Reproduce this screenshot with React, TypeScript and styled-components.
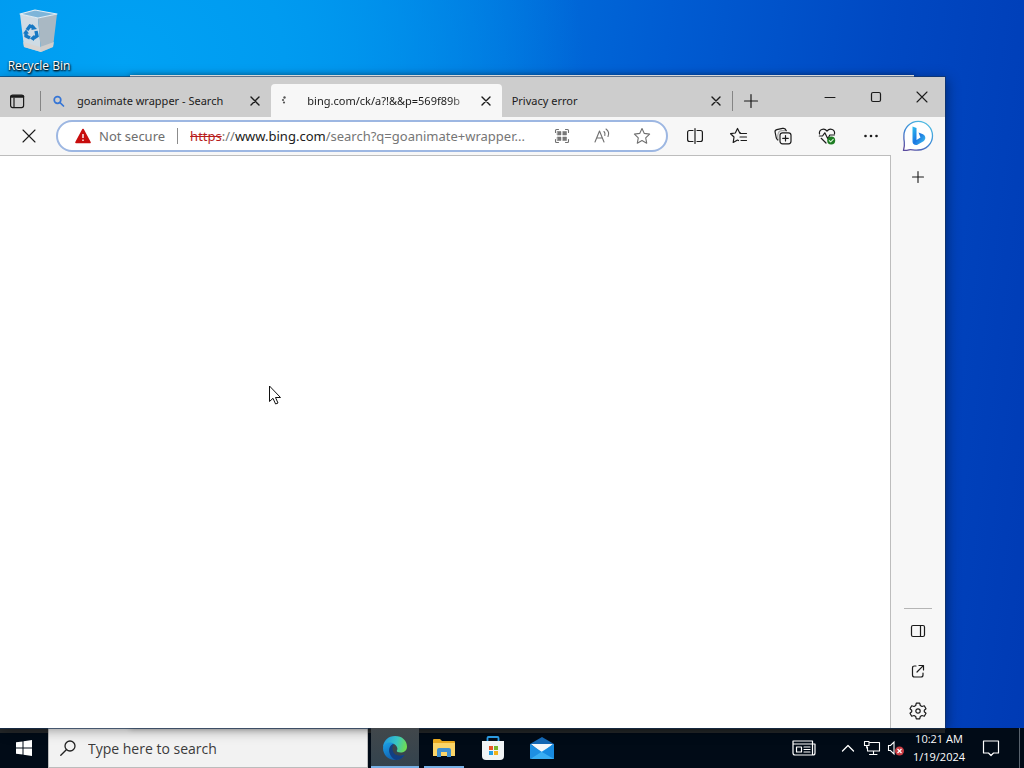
import React from "react";
import styled, { createGlobalStyle } from "styled-components";

const GlobalStyle = createGlobalStyle`
  *, *::before, *::after { box-sizing: border-box; }
  html, body, #root { height: 100%; margin: 0; }
  body { overflow: hidden; font-family: "Open Sans", "Noto Sans", sans-serif; font-size: 12px; color: #1b1b1b; }
  button, input { font: inherit; color: inherit; }
  svg { display: block; flex: none; }
`;

const Screen = styled.div`
  height: 100%;
  display: flex;
  flex-direction: column;
  background:
    radial-gradient(ellipse 45% 50% at 12% 8%, #00a2f4 0%, #009bf0 35%, rgba(0, 140, 234, 0) 100%),
    linear-gradient(97deg, #0094ee 0%, #0084e6 28%, #005cd2 60%, #0048c2 80%, #003ab4 100%);
`;

const Desktop = styled.main`
  position: relative;
  flex: 1;
  min-height: 0;
  padding: 8px 2px;
`;

const DesktopIcon = styled.button`
  width: 74px;
  padding: 0;
  border: 0;
  background: none;
  display: flex;
  flex-direction: column;
  align-items: center;
  gap: 4px;
  color: #fff;
  font-size: 12px;
  line-height: 18px;
  white-space: nowrap;
  text-shadow: 1px 1px 2px #000, 0 1px 2px #000;
`;

const WindowBehind = styled.div`
  position: absolute;
  top: 75px;
  right: 110px;
  bottom: 0;
  left: 130px;
  background: #f3f3f3;
  box-shadow: 0 0 6px rgba(0, 0, 0, 0.35);
`;

const BrowserWindow = styled.section`
  position: absolute;
  top: 77px;
  right: 79px;
  bottom: 0;
  left: 0;
  display: flex;
  flex-direction: column;
  background: #f7f7f7;
  box-shadow: 0 0 0 1px rgba(20, 50, 90, 0.6), 2px 2px 12px rgba(0, 0, 0, 0.4);
`;

const TabStrip = styled.header`
  display: flex;
  align-items: flex-end;
  height: 40px;
  background: #cdcdcd;
`;

const IconButton = styled.button<{ $w?: number; $h?: number }>`
  flex: none;
  width: ${(p) => p.$w ?? 36}px;
  height: ${(p) => p.$h ?? 32}px;
  padding: 0;
  border: 0;
  background: none;
  display: flex;
  align-items: center;
  justify-content: center;
`;

const TabActionsSlot = styled.div`
  flex: none;
  width: 40px;
`;

const Tabs = styled.nav`
  flex: 0 1 691px;
  min-width: 0;
  height: 33px;
  display: flex;
`;

const Tab = styled.div<{ $active?: boolean }>`
  flex: 1;
  min-width: 0;
  display: flex;
  align-items: center;
  padding: 0 4px 0 10px;
  border-radius: 4px 4px 0 0;
  background: ${(p) => (p.$active ? "#f7f7f7" : "transparent")};
`;

const TabTitle = styled.button<{ $fade?: boolean; $gap?: number }>`
  flex: 1;
  min-width: 0;
  padding: 0;
  margin-left: ${(p) => p.$gap ?? 0}px;
  border: 0;
  background: none;
  overflow: hidden;
  white-space: nowrap;
  text-align: left;
  font-family: "Noto Sans", sans-serif;
  font-size: 11px;
  line-height: 16px;
  mask-image: ${(p) => (p.$fade ? "linear-gradient(to left, transparent, #000 24px)" : "none")};
`;

const StripDivider = styled.span`
  flex: none;
  width: 1px;
  height: 20px;
  margin-bottom: 6px;
  background: #858585;
`;

const WindowControls = styled.div`
  display: flex;
  align-self: stretch;
  margin-left: auto;
`;

const WindowBody = styled.div`
  flex: 1;
  min-height: 0;
  display: flex;
`;

const MainColumn = styled.div`
  flex: 1;
  min-width: 0;
  display: flex;
  flex-direction: column;
`;

const Toolbar = styled.div`
  height: 39px;
  display: flex;
  align-items: center;
  padding: 0 1px 0 11px;
  border-bottom: 1px solid #bdbdbd;
`;

const AddressBar = styled.div`
  flex: 1;
  min-width: 0;
  height: 32px;
  margin: 0 9px;
  padding: 0 4px 0 17px;
  display: flex;
  align-items: center;
  border: 2px solid #9db7e2;
  border-radius: 16px;
  background: #fff;
  font-family: "Noto Sans", sans-serif;
  font-size: 13px;
  line-height: 20px;
`;

const SecurityButton = styled.button`
  flex: none;
  padding: 0 12px 0 0;
  border: 0;
  border-right: 1px solid #8c8c8c;
  background: none;
  display: flex;
  align-items: center;
  gap: 8px;
  height: 16px;
  color: #6e6e6e;
  white-space: nowrap;
`;

const UrlField = styled.div`
  flex: 1;
  min-width: 0;
  display: grid;
  margin-left: 12px;
  > * { grid-area: 1 / 1; }
`;

const UrlText = styled.span`
  overflow: hidden;
  white-space: nowrap;
  color: #767676;
  s { color: #b81d1d; }
  b { color: #202020; font-weight: 400; }
`;

const UrlInput = styled.input`
  width: 100%;
  min-width: 0;
  padding: 0;
  border: 0;
  outline: 0;
  background: transparent;
`;

const Tools = styled.div`
  display: flex;
  gap: 8px;
`;

const Page = styled.div`
  position: relative;
  flex: 1;
  background: #fff;
`;

const Pointer = styled.svg`
  position: absolute;
  top: 229px;
  left: 268px;
`;

const Sidebar = styled.aside`
  flex: none;
  width: 55px;
  display: flex;
  flex-direction: column;
`;

const SidebarTop = styled.div`
  height: 38px;
  display: flex;
  align-items: center;
  justify-content: center;
`;

const SidebarBody = styled.div`
  flex: 1;
  display: flex;
  flex-direction: column;
  align-items: center;
  gap: 8px;
  padding: 6px 0 1px;
  border-left: 1px solid #bdbdbd;
`;

const SidebarRule = styled.hr`
  width: 28px;
  margin: auto 0 -2px;
  border: 0;
  border-top: 1px solid #b5b5b5;
`;

/* The strip along the top, under the browser window, shows through lighter. */
const Taskbar = styled.footer`
  flex: none;
  height: 40px;
  display: flex;
  align-items: stretch;
  background: linear-gradient(#242729, #242729) 0 0 / calc(100% - 79px) 5px no-repeat, #010b17;
  color: #fff;
`;

const SearchBox = styled.label`
  flex: 0 1 320px;
  min-width: 0;
  margin-right: 3px;
  padding: 0 11px;
  display: flex;
  align-items: center;
  gap: 12px;
  border: 1px solid #bcbcbc;
  background: #f2f2f2;
`;

const SearchInput = styled.input`
  flex: 1;
  min-width: 0;
  padding: 0;
  border: 0;
  outline: 0;
  background: none;
  font-size: 14px;
  &::placeholder { color: #3b3b3b; opacity: 1; }
`;

const Apps = styled.nav`
  flex: 1;
  display: flex;
  gap: 1px;
`;

const AppButton = styled.button<{ $state?: "active" | "open" }>`
  width: 48px;
  padding: 0;
  border: 0;
  display: flex;
  flex-direction: column;
  align-items: center;
  justify-content: center;
  background: ${(p) => (p.$state === "active" ? "linear-gradient(#41474b, #33434e)" : "none")};
  position: relative;
  &::after {
    content: "";
    position: absolute;
    bottom: 0;
    left: ${(p) => (p.$state === "active" ? 0 : 4)}px;
    right: ${(p) => (p.$state === "active" ? 0 : 4)}px;
    height: ${(p) => (p.$state ? 2 : 0)}px;
    background: #76b0e6;
  }
`;

const Tray = styled.div`
  display: flex;
  align-items: center;
`;

const TrayIcons = styled.div`
  display: flex;
  margin-left: 8px;
`;

const Clock = styled.button`
  width: 62px;
  padding: 0;
  border: 0;
  background: none;
  color: #fff;
  font-size: 11px;
  line-height: 18px;
  text-align: center;
  white-space: nowrap;
`;

const ShowDesktop = styled.button`
  align-self: stretch;
  width: 5px;
  margin-left: 7px;
  padding: 0;
  border: 0;
  border-left: 1px solid #59636e;
  background: none;
`;

type LineProps = { w?: number; h?: number; color?: string; sw?: number; children: React.ReactNode };
const Line = ({ w = 20, h = 20, color = "#1b1b1b", sw = 1.2, children }: LineProps) => (
  <svg width={w} height={h} viewBox={`0 0 ${w} ${h}`} fill="none" stroke={color} strokeWidth={sw} strokeLinecap="round" strokeLinejoin="round" aria-hidden="true">
    {children}
  </svg>
);

const CloseGlyph = ({ size = 8, sw = 1.4 }: { size?: number; sw?: number }) => (
  <Line w={size + 2} h={size + 2} sw={sw}>
    <path d={`M1 1 L${size + 1} ${size + 1} M${size + 1} 1 L1 ${size + 1}`} />
  </Line>
);

const RecycleBin = () => (
  <svg width="42" height="45" viewBox="0 0 42 45" aria-hidden="true">
    <path d="M2 6 L20 10 L23 44 L6 39 Z" fill="#cfdbe4" />
    <path d="M20 10 L39 6 L35 39 L23 44 Z" fill="#a9b8c3" />
    <path d="M2 6 L17 2 L39 6 L20 10 Z" fill="#7eb5d9" stroke="#e4edf3" strokeWidth="1.200" strokeLinejoin="round" />
    <path d="M5 34 L22 39 L36 34 L35 39 L23 44 L6 39 Z" fill="#d8d3cf" opacity="0.800" />
    <g fill="none" stroke="#1679c4" strokeWidth="3.400">
      <path d="M9 22 L12 18 L16 19.500" />
      <path d="M18 23 L19 28 L15 30.500" />
      <path d="M12 30 L8 28 L8 24.500" />
    </g>
    <g fill="#1679c4">
      <path d="M14 16 L19 21 L13.500 22 Z" />
      <path d="M16 27 L12 30.500 L16 33 Z" />
      <path d="M5 25.500 L8 21.500 L11 25.500 Z" />
    </g>
  </svg>
);

const TabActions = () => (
  <Line w={16} h={16}>
    <rect x="1.600" y="2.100" width="13" height="12.500" rx="2" />
    <path d="M2.500 3.500 H14" strokeWidth="2.400" />
    <path d="M5 5 V14" />
  </Line>
);

const SplitScreen = () => (
  <Line>
    <path d="M8 4.500 H4.500 Q2.600 4.500 2.600 6.500 V13.500 Q2.600 15.500 4.500 15.500 H8 M12 4.500 H15.500 Q17.400 4.500 17.400 6.500 V13.500 Q17.400 15.500 15.500 15.500 H12 M10 2.500 V17.500" />
  </Line>
);

const Favorites = () => (
  <Line>
    <path d="M11.200 6.700 L10.500 6.600 L8.500 2.500 L6.300 7 L1.600 7.700 L5 11 L4.200 16.500 L8.500 14 L9.500 14.500 M11 7.500 H17.500 M11 11 H17.500 M12 14.500 H17.500" />
  </Line>
);

const Collections = () => (
  <Line>
    <path d="M4.800 14 C3.800 13.500 3.600 12.800 3.300 12 L2.100 6.200 C1.800 4.800 2.500 3.900 3.800 3.600 L9.500 2.400 C11.500 2 12.800 3 13.200 4.600" />
    <path d="M5 13.700 C4.500 11 4.600 9 5.200 7.500 C5.800 5.500 7 4.700 9 4.700 H13.200" opacity="0.350" />
    <rect x="7" y="6.800" width="11" height="11" rx="2.500" />
    <path d="M12.500 9.500 V15 M9.700 12.300 H15.300" />
  </Line>
);

const Performance = () => (
  <Line>
    <path d="M2.500 8 C1.700 3.500 7 1.500 10 5 C13 1.500 18.300 3.500 17.500 8 M4.200 12.300 L9 17" />
    <path d="M2.300 10 H5.500 L7.800 6.800 L10.800 12.800 L12.800 9 H17.300" />
    <circle cx="14.200" cy="14.500" r="4" fill="#1d7d22" stroke="none" />
    <path d="M12.300 14.600 L13.700 15.900 L16.200 13.300" stroke="#d9f3d7" strokeWidth="1.100" />
  </Line>
);

const BingLogo = () => (
  <svg width="34" height="34" viewBox="0 0 34 34" aria-hidden="true">
    <defs>
      <linearGradient id="bing-ring" x1="0.800" y1="0" x2="0.200" y2="1">
        <stop offset="0" stopColor="#4fc0e2" />
        <stop offset="0.550" stopColor="#3c86d6" />
        <stop offset="1" stopColor="#5a4a9e" />
      </linearGradient>
      <linearGradient id="bing-b" x1="0" y1="0" x2="1" y2="1">
        <stop offset="0" stopColor="#30c0ee" />
        <stop offset="0.500" stopColor="#1b77e2" />
        <stop offset="1" stopColor="#43c7ee" />
      </linearGradient>
    </defs>
    <path d="M2.500 31.300 C3.300 28 3.700 26 3.300 23 C2.800 20.500 2.800 19 2.900 16.500 A14.300 14.300 0 1 1 17.300 31 C13 31.300 10 30.300 8 30.800 C6 31.300 4.500 31.500 2.500 31.300 Z" fill="#fff" stroke="url(#bing-ring)" strokeWidth="1.300" />
    <path d="M11.500 7.500 L15.500 9 V21 L19.500 18.500 L17.500 13.500 L22 15.300 C25 16.800 25 20.500 22.500 22.300 L16 26 C13.500 26.500 11.500 25 11.500 22.500 Z" fill="url(#bing-b)" />
  </svg>
);

const SettingsGear = () => (
  <Line>
    <path d="M8.300 2.200 H11.700 L12.300 4.500 L14 5.500 L16.300 4.800 L18 7.800 L16.300 9.200 V10.800 L18 12.200 L16.300 15.200 L14 14.500 L12.300 15.500 L11.700 17.800 H8.300 L7.700 15.500 L6 14.500 L3.700 15.200 L2 12.200 L3.700 10.800 V9.200 L2 7.800 L3.700 4.800 L6 5.500 L7.700 4.500 Z" />
    <circle cx="10" cy="10" r="2.200" />
  </Line>
);

const EdgeLogo = () => (
  <svg width="26" height="26" viewBox="0 0 26 26" aria-hidden="true">
    <defs>
      <linearGradient id="edge-top" x1="0" y1="0.300" x2="1" y2="0.500">
        <stop offset="0" stopColor="#2196df" />
        <stop offset="0.550" stopColor="#37c4c5" />
        <stop offset="1" stopColor="#70dd50" />
      </linearGradient>
      <linearGradient id="edge-left" x1="0" y1="0" x2="0.600" y2="1">
        <stop offset="0" stopColor="#1aa1e8" />
        <stop offset="1" stopColor="#115aa9" />
      </linearGradient>
    </defs>
    <path d="M1 13 C1 5.500 6.500 1 13 1 C20.500 1 25 6 25 11.500 C25 15.500 22 17.500 18.500 17.500 C16 17.500 14.500 16.700 14.800 15.500 C16 14.500 15.700 11 12 9 C7 7 2 9 1 13 Z" fill="url(#edge-top)" />
    <path d="M1 13 C2 7.500 8 6.300 12 9 C9 10 8 13 9 16 C10.500 20.500 17 22.500 22.500 19.700 C20 23.600 16.500 25 13 25 C6 25 1 19.500 1 13 Z" fill="url(#edge-left)" />
    <path d="M12 9 C8 9.500 6.300 14 7.500 18 C9 22.500 12 24.700 14.500 25 C18 24.700 21 22.700 22.500 19.700 C17 22 12 20 10.800 16 C10 13 10.500 10.500 12 9 Z" fill="#123f83" />
  </svg>
);

const ExplorerLogo = () => (
  <svg width="22" height="20" viewBox="0 0 22 20" aria-hidden="true">
    <path d="M0 2 Q0 1 1 1 H7 L9 3 H21 Q22 3 22 4 V18 H0 Z" fill="#e9a91f" />
    <path d="M0 5 H22 V18 H0 Z" fill="#fbd568" />
    <path d="M4 19 V12 Q4 10 6 10 H16 Q18 10 18 12 V19 H14 V14 H8 V19 Z" fill="#3f8fcf" />
  </svg>
);

const StoreLogo = () => (
  <svg width="24" height="24" viewBox="0 0 24 24" aria-hidden="true">
    <path d="M6.500 6 V2 Q6.500 1 7.500 1 H16.500 Q17.500 1 17.500 2 V6" fill="none" stroke="#2b9ae0" strokeWidth="1.800" />
    <path d="M1 5 H23 V20 Q23 24 19 24 H5 Q1 24 1 20 Z" fill="#f1f4f6" />
    <path d="M8 10 H12 V14 H8 Z" fill="#e65528" />
    <path d="M13 10 H17 V14 H13 Z" fill="#78b52d" />
    <path d="M8 15 H12 V19 H8 Z" fill="#24a0e4" />
    <path d="M13 15 H17 V19 H13 Z" fill="#f2b21a" />
  </svg>
);

const MailLogo = () => (
  <svg width="24" height="22" viewBox="0 0 24 22" aria-hidden="true">
    <path d="M0 7 L12 0 L24 7 V21 H0 Z" fill="#1467b3" />
    <path d="M1 7 H23 L12 16 Z" fill="#f4f8fb" />
    <path d="M0 7 L12 15 L0 22 Z" fill="#1e8fe2" />
    <path d="M24 7 L0 22 H24 Z" fill="#39aef3" />
    <path d="M24 7 L12 15 L24 22 Z" fill="#178ae0" />
  </svg>
);

export default function App() {
  return (
    <>
      <GlobalStyle />
      <Screen>
        <Desktop>
          <DesktopIcon>
            <RecycleBin />
            Recycle Bin
          </DesktopIcon>
          <WindowBehind />
          <BrowserWindow>
            <TabStrip>
              <TabActionsSlot>
                <IconButton $w={33} aria-label="Tab actions"><TabActions /></IconButton>
              </TabActionsSlot>
              <StripDivider />
              <Tabs>
                <Tab>
                  <Line w={14} h={14} color="#3575d6" sw={1.7}>
                    <circle cx="6.500" cy="6" r="3.300" />
                    <path d="M9 8.700 L12.500 12" />
                  </Line>
                  <TabTitle $gap={12}>goanimate wrapper - Search</TabTitle>
                  <IconButton $w={24} $h={24} aria-label="Close tab"><CloseGlyph /></IconButton>
                </Tab>
                <Tab $active>
                  <svg width="8" height="12" viewBox="0 0 8 12" fill="#555" aria-hidden="true">
                    <circle cx="3.500" cy="2.500" r="1.200" />
                    <circle cx="2" cy="5" r="1.100" />
                    <circle cx="3" cy="7.500" r="1.100" />
                  </svg>
                  <TabTitle $gap={18} $fade>bing.com/ck/a?!&amp;&amp;p=569f89b</TabTitle>
                  <IconButton $w={24} $h={24} aria-label="Close tab"><CloseGlyph /></IconButton>
                </Tab>
                <Tab>
                  <TabTitle>Privacy error</TabTitle>
                  <IconButton $w={24} $h={24} aria-label="Close tab"><CloseGlyph /></IconButton>
                </Tab>
              </Tabs>
              <StripDivider />
              <IconButton aria-label="New tab">
                <Line w={16} h={16}><path d="M8 1.500 V14.500 M1.500 8 H14.500" /></Line>
              </IconButton>
              <WindowControls>
                <IconButton $w={46} $h={40} aria-label="Minimize"><Line w={12} h={12} sw={1}><path d="M1 6.500 H11" /></Line></IconButton>
                <IconButton $w={46} $h={40} aria-label="Maximize"><Line w={12} h={12}><rect x="1.500" y="1.500" width="9" height="9" rx="1.500" /></Line></IconButton>
                <IconButton $w={46} $h={40} aria-label="Close"><CloseGlyph size={10} sw={1.1} /></IconButton>
              </WindowControls>
            </TabStrip>
            <WindowBody>
              <MainColumn>
                <Toolbar>
                  <IconButton aria-label="Stop loading"><CloseGlyph size={12} sw={1.1} /></IconButton>
                  <AddressBar>
                    <SecurityButton>
                      <svg width="16" height="16" viewBox="0 0 16 16" aria-hidden="true">
                        <path d="M8 1.500 L15 14.500 H1 Z" fill="#c80d0d" stroke="#c80d0d" strokeWidth="1.600" strokeLinejoin="round" />
                        <path d="M8 6 V10 M8 11.500 V13" stroke="#fff" strokeWidth="1.400" />
                      </svg>
                      Not secure
                    </SecurityButton>
                    <UrlField>
                      <UrlText><s>https</s>://<b>www.bing.com</b>/search?q=goanimate+wrapper...</UrlText>
                      <UrlInput type="text" aria-label="Address" />
                    </UrlField>
                    <IconButton $w={40} $h={28} aria-label="Apps">
                      <Line w={16} h={16} color="#707070" sw={1.1}>
                        <path d="M1.500 4.500 V2.500 Q1.500 1.500 2.500 1.500 H4.500 M11.500 1.500 H13.500 Q14.500 1.500 14.500 2.500 V4.500 M14.500 11.500 V13.500 Q14.500 14.500 13.500 14.500 H11.500 M4.500 14.500 H2.500 Q1.500 14.500 1.500 13.500 V11.500" />
                        <path d="M3.500 3.500 H7 V7 H3.500 Z M9 3.500 H12.500 V7 H9 Z M3.500 9 H7 V12.500 H3.500 Z M9 9 H12.500 V12.500 H9 Z" fill="#777" strokeWidth="0.500" />
                      </Line>
                    </IconButton>
                    <IconButton $w={40} $h={28} aria-label="Read aloud">
                      <Line w={18} h={18} color="#707070" sw={1.1}>
                        <path d="M2 15 L6.500 4 L11 15 M3.500 11 H9.500 M11 4.500 Q12.500 6 11.800 8.500 M13 2 Q17 5 15 9.500" />
                      </Line>
                    </IconButton>
                    <IconButton $w={40} $h={28} aria-label="Add to favorites">
                      <Line w={18} h={18} color="#707070" sw={1.1}>
                        <path d="M9 1.500 L11.300 6.400 L16.600 7.100 L12.700 10.800 L13.700 16.200 L9 13.600 L4.300 16.200 L5.300 10.800 L1.400 7.100 L6.700 6.400 Z" />
                      </Line>
                    </IconButton>
                  </AddressBar>
                  <Tools>
                    <IconButton aria-label="Split screen"><SplitScreen /></IconButton>
                    <IconButton aria-label="Favorites"><Favorites /></IconButton>
                    <IconButton aria-label="Collections"><Collections /></IconButton>
                    <IconButton aria-label="Browser essentials"><Performance /></IconButton>
                    <IconButton aria-label="Settings and more">
                      <svg width="16" height="4" viewBox="0 0 16 4" fill="#1b1b1b" aria-hidden="true">
                        <circle cx="2.500" cy="2" r="1.300" /><circle cx="8" cy="2" r="1.300" /><circle cx="13.500" cy="2" r="1.300" />
                      </svg>
                    </IconButton>
                  </Tools>
                </Toolbar>
                <Page>
                  <Pointer width="14" height="22" viewBox="0 0 14 22" aria-hidden="true">
                    <path d="M1.500 1 V16.500 L5 13.300 L7.600 19 L10 18 L7.500 12.500 H12.500 Z" fill="#fff" stroke="#111" strokeWidth="1" />
                  </Pointer>
                </Page>
              </MainColumn>
              <Sidebar>
                <SidebarTop>
                  <IconButton $h={36} aria-label="Bing chat"><BingLogo /></IconButton>
                </SidebarTop>
                <SidebarBody>
                  <IconButton aria-label="Customize sidebar">
                    <Line w={14} h={14} sw={1.1}><path d="M7 1.500 V12.500 M1.500 7 H12.500" /></Line>
                  </IconButton>
                  <SidebarRule />
                  <IconButton aria-label="Hide sidebar">
                    <Line w={16} h={16}><rect x="1.500" y="2.500" width="13" height="11" rx="1.500" /><path d="M10.500 3 V13" /></Line>
                  </IconButton>
                  <IconButton aria-label="Open in new window">
                    <Line w={16} h={16}><path d="M6 3 H4.500 Q2.500 3 2.500 5 V12 Q2.500 14 4.500 14 H11 Q13 14 13 12 V10 M9 2.500 H13.500 V7 M13.300 2.700 L7 9" /></Line>
                  </IconButton>
                  <IconButton aria-label="Settings"><SettingsGear /></IconButton>
                </SidebarBody>
              </Sidebar>
            </WindowBody>
          </BrowserWindow>
        </Desktop>
        <Taskbar>
          <IconButton $w={48} $h={40} aria-label="Start">
            <svg width="16" height="16" viewBox="0 0 16 16" fill="#fff" aria-hidden="true">
              <path d="M0 2.300 L6.500 1.400 V7.500 H0 Z M7.500 1.200 L16 0 V7.500 H7.500 Z M0 8.500 H6.500 V14.600 L0 13.700 Z M7.500 8.500 H16 V16 L7.500 14.800 Z" />
            </svg>
          </IconButton>
          <SearchBox>
            <Line w={16} h={16} color="#222" sw={1.3}><circle cx="10" cy="6" r="5" /><path d="M6.300 9.700 L0.800 15.200" /></Line>
            <SearchInput type="text" aria-label="Search" placeholder="Type here to search" />
          </SearchBox>
          <Apps>
            <AppButton $state="active" aria-label="Microsoft Edge"><EdgeLogo /></AppButton>
            <AppButton $state="open" aria-label="File Explorer"><ExplorerLogo /></AppButton>
            <AppButton aria-label="Microsoft Store"><StoreLogo /></AppButton>
            <AppButton aria-label="Mail"><MailLogo /></AppButton>
          </Apps>
          <Tray>
            <IconButton $w={48} aria-label="News and interests">
              <Line w={24} h={16} color="#fff">
                <path d="M1 1 H20.500 V15 H3 Q1 15 1 13 Z M20.500 4 H23 V13 Q23 15 21 15 H3 M1 4 H20" />
                <path d="M4.500 7 H9.500 V12 H4.500 Z M12 7 H18 M12 9.500 H18 M12 12 H18" />
              </Line>
            </IconButton>
            <TrayIcons>
              <IconButton $w={24} aria-label="Show hidden icons">
                <Line w={14} h={8} color="#fff" sw={1.3}><path d="M1.500 7 L7 1.500 L12.500 7" /></Line>
              </IconButton>
              <IconButton $w={24} aria-label="Network">
                <Line w={18} h={16} color="#fff" sw={1.1}><path d="M7 2.500 H16.500 V11 H4.500 V7 M10.500 11 V14 M6.500 14.500 H14 M1.500 1.500 H6 V5.500 H1.500 Z M3.700 5.500 V8" /></Line>
              </IconButton>
              <IconButton $w={24} aria-label="Volume muted">
                <svg width="18" height="16" viewBox="0 0 18 16" fill="none" aria-hidden="true">
                  <path d="M1.500 5.500 H3.500 L7 2 V14 L3.500 10.500 H1.500 Z" stroke="#fff" strokeWidth="1.100" />
                  <circle cx="12.500" cy="11" r="4.500" fill="#c93b42" />
                  <path d="M10.500 9 L14.500 13 M14.500 9 L10.500 13" stroke="#fff" strokeWidth="1.200" />
                </svg>
              </IconButton>
            </TrayIcons>
            <Clock>10:21 AM<br />1/19/2024</Clock>
            <IconButton $w={42} aria-label="Notifications">
              <Line w={18} h={18} color="#fff"><path d="M1.500 2 H16.500 V14 H11.500 L9 16.500 L6.500 14 H1.500 Z" /></Line>
            </IconButton>
            <ShowDesktop aria-label="Show desktop" />
          </Tray>
        </Taskbar>
      </Screen>
    </>
  );
}
